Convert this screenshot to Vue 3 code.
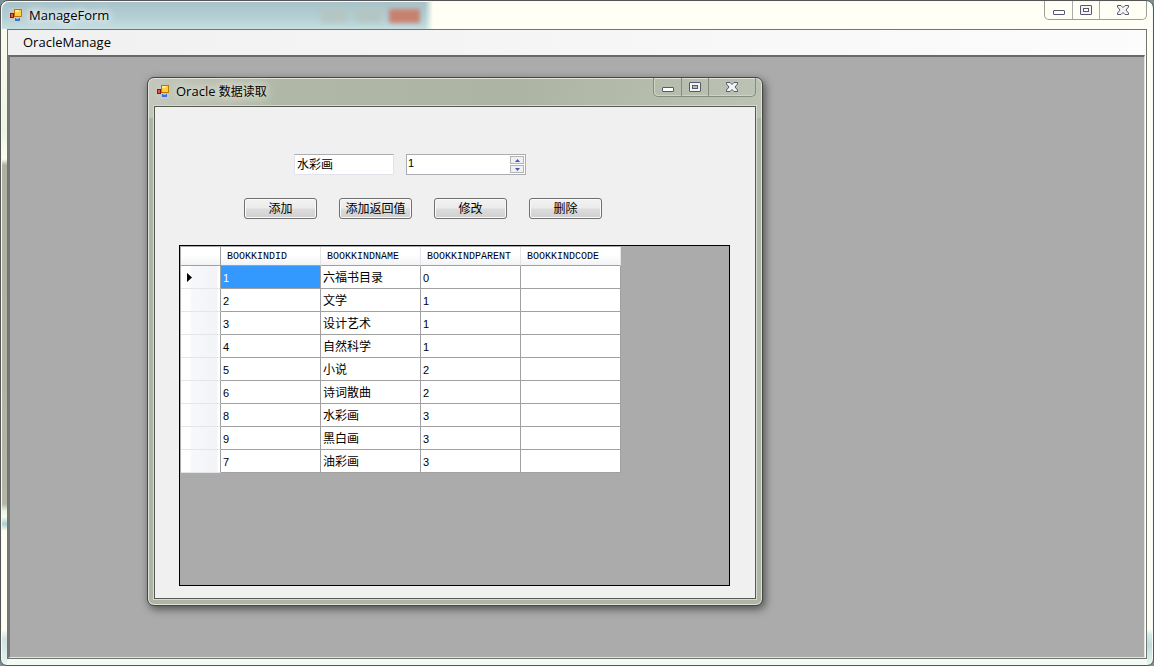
<script setup>
import { ref } from 'vue'

const name = ref('水彩画')
const amount = ref('1')
const actions = ['添加', '添加返回值', '修改', '删除']
const columns = ['BOOKKINDID', 'BOOKKINDNAME', 'BOOKKINDPARENT', 'BOOKKINDCODE']
const rows = [
  ['1', '六福书目录', '0', ''],
  ['2', '文学', '1', ''],
  ['3', '设计艺术', '1', ''],
  ['4', '自然科学', '1', ''],
  ['5', '小说', '2', ''],
  ['6', '诗词散曲', '2', ''],
  ['8', '水彩画', '3', ''],
  ['9', '黑白画', '3', ''],
  ['7', '油彩画', '3', ''],
]
function step(delta) {
  amount.value = String(Number(amount.value) + delta)
}
</script>

<template>
  <div class="shell">
    <div class="ghost">
      <i class="blur-btn"></i><i class="blur-btn"></i><i class="blur-btn red"></i>
    </div>
    <header class="titlebar">
      <svg class="app-icon" width="14" height="14" viewBox="0 0 14 14" shape-rendering="crispEdges">
        <rect x="0" y="0" width="14" height="14" fill="#ccc" fill-opacity=".6" />
        <rect x="5" y="1" width="8" height="8" fill="#b57a00" />
        <rect x="6" y="2" width="6" height="6" fill="#ffcf3c" />
        <rect x="6" y="2" width="4" height="2" fill="#ffe795" />
        <rect x="1" y="5" width="4" height="5" fill="#8f1414" />
        <rect x="2" y="6" width="2" height="3" fill="#e0584a" />
        <rect x="6" y="10" width="5" height="3" fill="#3d70d8" />
        <rect x="7" y="10" width="3" height="1" fill="#8fb8ff" />
      </svg>
      <span class="title">ManageForm</span>
      <div class="caption">
        <button type="button" aria-label="Minimize">
          <svg width="12" height="5" viewBox="0 0 12 5"><rect x=".5" y=".5" width="11" height="4" rx=".5" fill="#fff" stroke="#55586f" /></svg>
        </button>
        <button type="button" aria-label="Maximize">
          <svg width="12" height="10" viewBox="0 0 12 10"><rect x=".5" y=".5" width="11" height="9" rx=".5" fill="#f4f4f4" stroke="#55586f" /><rect x="3.500" y="3.500" width="5" height="3" fill="#fff" stroke="#55586f" /></svg>
        </button>
        <button type="button" class="close" aria-label="Close">
          <svg width="12" height="10" viewBox="0 0 12 10"><path d="M.5 .5h3.500l2 2 2-2h3.500v1.500L9 5l2.500 3v1.500H8l-2-2-2 2H.5V8L3 5 .5 2z" fill="#f4f4f4" stroke="#55586f" /></svg>
        </button>
      </div>
    </header>

    <div class="client">
      <nav class="menu"><button type="button">OracleManage</button></nav>
      <main class="mdi">
        <section class="child">
          <header class="titlebar">
            <svg class="app-icon" width="14" height="14" viewBox="0 0 14 14" shape-rendering="crispEdges">
              <rect x="0" y="0" width="14" height="14" fill="#ccc" fill-opacity=".4" />
              <rect x="5" y="0" width="8" height="8" fill="#b57a00" />
              <rect x="6" y="1" width="6" height="6" fill="#ffcf3c" />
              <rect x="6" y="1" width="4" height="2" fill="#ffe795" />
              <rect x="1" y="4" width="4" height="5" fill="#8f1414" />
              <rect x="2" y="5" width="2" height="3" fill="#e0584a" />
              <rect x="6" y="9" width="5" height="3" fill="#3d70d8" />
              <rect x="7" y="9" width="3" height="1" fill="#8fb8ff" />
            </svg>
            <span class="title">Oracle <span class="han">数据读取</span></span>
            <div class="caption">
              <button type="button" aria-label="Minimize">
                <svg width="12" height="5" viewBox="0 0 12 5"><rect x=".5" y=".5" width="11" height="4" rx=".5" fill="#fff" stroke="#55586f" /></svg>
              </button>
              <button type="button" aria-label="Maximize">
                <svg width="12" height="10" viewBox="0 0 12 10"><rect x=".5" y=".5" width="11" height="9" rx=".5" fill="#f4f4f4" stroke="#55586f" /><rect x="3.500" y="3.500" width="5" height="3" fill="#b9bfae" stroke="#55586f" /></svg>
              </button>
              <button type="button" class="close" aria-label="Close">
                <svg width="12" height="10" viewBox="0 0 12 10"><path d="M.5 .5h3.500l2 2 2-2h3.500v1.500L9 5l2.500 3v1.500H8l-2-2-2 2H.5V8L3 5 .5 2z" fill="#f4f4f4" stroke="#55586f" /></svg>
              </button>
            </div>
          </header>

          <div class="form">
            <div class="fields">
              <input v-model="name" class="text" type="text" aria-label="BOOKKINDNAME" />
              <div class="spinner">
                <input v-model="amount" type="text" inputmode="numeric" aria-label="BOOKKINDPARENT" />
                <div class="arrows">
                  <button type="button" aria-label="Increase" @click="step(1)">
                    <svg width="5" height="3" viewBox="0 0 5 3"><path d="M0 3L2.500 0 5 3z" fill="#3f5bb5" /></svg>
                  </button>
                  <button type="button" aria-label="Decrease" @click="step(-1)">
                    <svg width="5" height="3" viewBox="0 0 5 3"><path d="M0 0L2.500 3 5 0z" fill="#3f5bb5" /></svg>
                  </button>
                </div>
              </div>
            </div>
            <div class="actions">
              <button v-for="a in actions" :key="a" type="button">{{ a }}</button>
            </div>
            <div class="grid">
              <table>
                <thead>
                  <tr>
                    <td class="corner"></td>
                    <th v-for="c in columns" :key="c" scope="col">{{ c }}</th>
                  </tr>
                </thead>
                <tbody>
                  <tr v-for="(r, i) in rows" :key="r[0]">
                    <td class="rowhead">
                      <svg v-if="i === 0" width="5" height="9" viewBox="0 0 5 9"><path d="M0 0L5 4.500 0 9z" fill="#000" /></svg>
                    </td>
                    <td v-for="(v, j) in r" :key="j" :class="{ selected: i === 0 && j === 0, num: j !== 1 }">{{ v }}</td>
                  </tr>
                </tbody>
              </table>
            </div>
          </div>
        </section>
      </main>
    </div>
  </div>
</template>

<style>
body {
  background: #7b9098;
}
</style>

<style scoped>
* {
  box-sizing: border-box;
}
button,
input {
  font: inherit;
  color: inherit;
  margin: 0;
  padding: 0;
  border: 0;
  background: none;
  border-radius: 0;
}
.shell {
  position: relative;
  display: flex;
  flex-direction: column;
  height: 100vh;
  min-height: 640px;
  padding: 1px 6px 6px;
  border: 1px solid #555;
  border-radius: 8px 8px 7px 7px;
  box-shadow: inset 0 0 0 1px #f4fbf8;
  background:
    linear-gradient(#fbfef0 0, #eef5e2 130px, #fbfef0 158px, #aeb1a2 164px, #b3b6a6 503px, #e8f5e4 510px, #f4fbea 516px, #a9cfd1 523px, #fffff5 530px, #fffff5 628px, #cfe3e2 638px, #e4f3ee 100%) 0 0 / 6px 100% no-repeat,
    linear-gradient(#fffff5 0, #fffff5 628px, #d2ebe4 634px, #c2dbda 645px, #e5f6ee 100%) 100% 0 / 6px 100% no-repeat,
    linear-gradient(#fffff5 0, #fffff5 94%, #f3fbf2 100%);
  color: #000;
  font-family: "Open Sans", "Noto Sans CJK SC", sans-serif;
  font-size: 12px;
  line-height: 16px;
}
.ghost {
  position: absolute;
  left: 1px;
  top: 1px;
  width: 433px;
  height: 27px;
  display: flex;
  justify-content: flex-end;
  gap: 7px;
  padding: 7px 15px 0 0;
  border-radius: 7px 0 0 0;
  background:
    linear-gradient(90deg, transparent 423px, #fffff5 431px),
    linear-gradient(#a9c2ca, #b4d0d5 60%, #c7dfe1);
}
.blur-btn {
  width: 27px;
  height: 13px;
  background: #b4c5c1;
  filter: blur(3px);
}
.blur-btn.red {
  width: 31px;
  height: 14px;
  background: #c8806f;
  filter: blur(2px);
}
.titlebar {
  position: relative;
  display: flex;
  flex: none;
  align-items: center;
  gap: 6px;
  height: 27px;
  padding: 0 0 2px 2px;
}
.title {
  font-size: 13px;
  text-shadow: 0 0 6px #fff, 0 0 10px #fff, 0 0 14px #fff;
}
.child .title {
  text-shadow: 0 0 6px #dfe4d8, 0 0 10px #dfe4d8, 0 0 12px #dfe4d8;
}
.han {
  font-size: 12px;
}
.caption {
  display: flex;
  align-self: flex-start;
  margin: -1px 0 0 auto;
  height: 19px;
  border: 1px solid #9c9f98;
  border-top: 0;
  border-radius: 0 0 5px 5px;
}
.caption button {
  display: flex;
  align-items: center;
  justify-content: center;
  width: 27px;
}
.caption button + button {
  border-left: 1px solid #a9aca4;
}
.caption button:first-child svg {
  margin-top: 5px;
}
.caption .close {
  width: 47px;
}
.client {
  display: flex;
  flex: 1;
  flex-direction: column;
  min-height: 0;
  border: 1px solid #707570;
  background: #fff;
}
.menu {
  display: flex;
  flex: none;
  align-items: center;
  height: 25px;
  padding: 0 0 2px 15px;
  background: linear-gradient(90deg, #f0f0f0, #fcfcfc);
  font-size: 13px;
}
.mdi {
  position: relative;
  flex: 1;
  margin: 0 1px 0 0;
  border: 2px solid #777;
  border-width: 2px 1px 1px 2px;
  border-color: #696969 #e3e3e3 #e3e3e3 #777;
  background: #ababab;
}
/* child window placed freely on the MDI desktop */
.child {
  position: absolute;
  left: 137px;
  top: 20px;
  display: flex;
  flex-direction: column;
  width: 616px;
  height: 529px;
  padding: 1px 6px 6px;
  border: 1px solid #444743;
  border-radius: 7px;
  background: linear-gradient(100deg, #c3c8bb 0, #b1b7a7 22%, #adb4a3 60%, #bcc3b4 100%) 0 0 / 100% 40px no-repeat, #afb5a5;
  box-shadow: inset 0 0 0 1px #dfe3da, 2px 3px 9px rgba(0, 0, 0, .55);
}
.child .caption {
  border-color: #878c81;
  box-shadow: inset 1px -1px 0 #ced3c8;
}
.child .caption button + button {
  border-color: #878c81;
}
.form {
  flex: 1;
  padding: 47px 25px 12px 24px;
  border: 1px solid #555952;
  outline: 1px solid #d5dad0;
  background: #f0f0f0;
  font-family: "Liberation Sans", "Noto Sans CJK SC", sans-serif;
}
.fields {
  display: flex;
  gap: 12px;
  padding-left: 115px;
}
.text {
  width: 100px;
  height: 21px;
  padding: 0 2px 3px;
  border: 1px solid #e2e3ea;
  border-top-color: #abadb3;
  background: #fff;
}
.spinner {
  display: flex;
  width: 120px;
  height: 21px;
  border: 1px solid #abadb3;
  background: #fff;
}
.spinner input {
  flex: 1;
  min-width: 0;
  padding: 0 1px 3px;
  font-size: 11px;
}
.arrows {
  display: flex;
  flex-direction: column;
  gap: 1px;
  margin: 1px;
  width: 14px;
}
.arrows button {
  display: flex;
  flex: 1;
  align-items: center;
  justify-content: center;
  border: 1px solid #b4b4b4;
  background: #f0f0f0;
}
.actions {
  display: flex;
  gap: 22px;
  padding: 23px 0 0 65px;
}
.actions button {
  width: 73px;
  height: 21px;
  border: 1px solid #707070;
  border-radius: 3px;
  background: linear-gradient(#f2f2f2, #ebebeb 48%, #dddddd 52%, #cfcfcf);
  box-shadow: inset 0 0 0 1px #fafafa;
  line-height: 18px;
}
.grid {
  height: 341px;
  margin-top: 26px;
  border: 1px solid #000;
  background: #ababab;
}
table {
  border-collapse: separate;
  border-spacing: 0;
  table-layout: fixed;
  width: 440px;
  margin: 1px;
}
.corner {
  width: 40px;
}
th,
.corner {
  height: 19px;
  padding: 1px 0 0 6px;
  border-right: 1px solid #e3e4e6;
  border-bottom: 1px solid #a0a0a0;
  background: linear-gradient(#fff 45%, #f2f3f5);
  font: 10px/16px "Liberation Mono", monospace;
  text-align: left;
}
.corner {
  border-right-color: #a0a0a0;
}
tbody td {
  height: 23px;
  padding: 1px 1px 0 2px;
  border-right: 1px solid #a0a0a0;
  border-bottom: 1px solid #a0a0a0;
  background: #fff;
}
tbody td.num {
  font-size: 11px;
}
tbody td.rowhead {
  padding-left: 6px;
  border-bottom-color: #e3e5e8;
  background: linear-gradient(90deg, #fff 9px, #f7f8fa 10px, #f2f4f7 36px, #fff 37px);
}
.rowhead svg {
  display: block;
}
tbody td.selected {
  background: #3399ff;
  color: #fff;
}
</style>
